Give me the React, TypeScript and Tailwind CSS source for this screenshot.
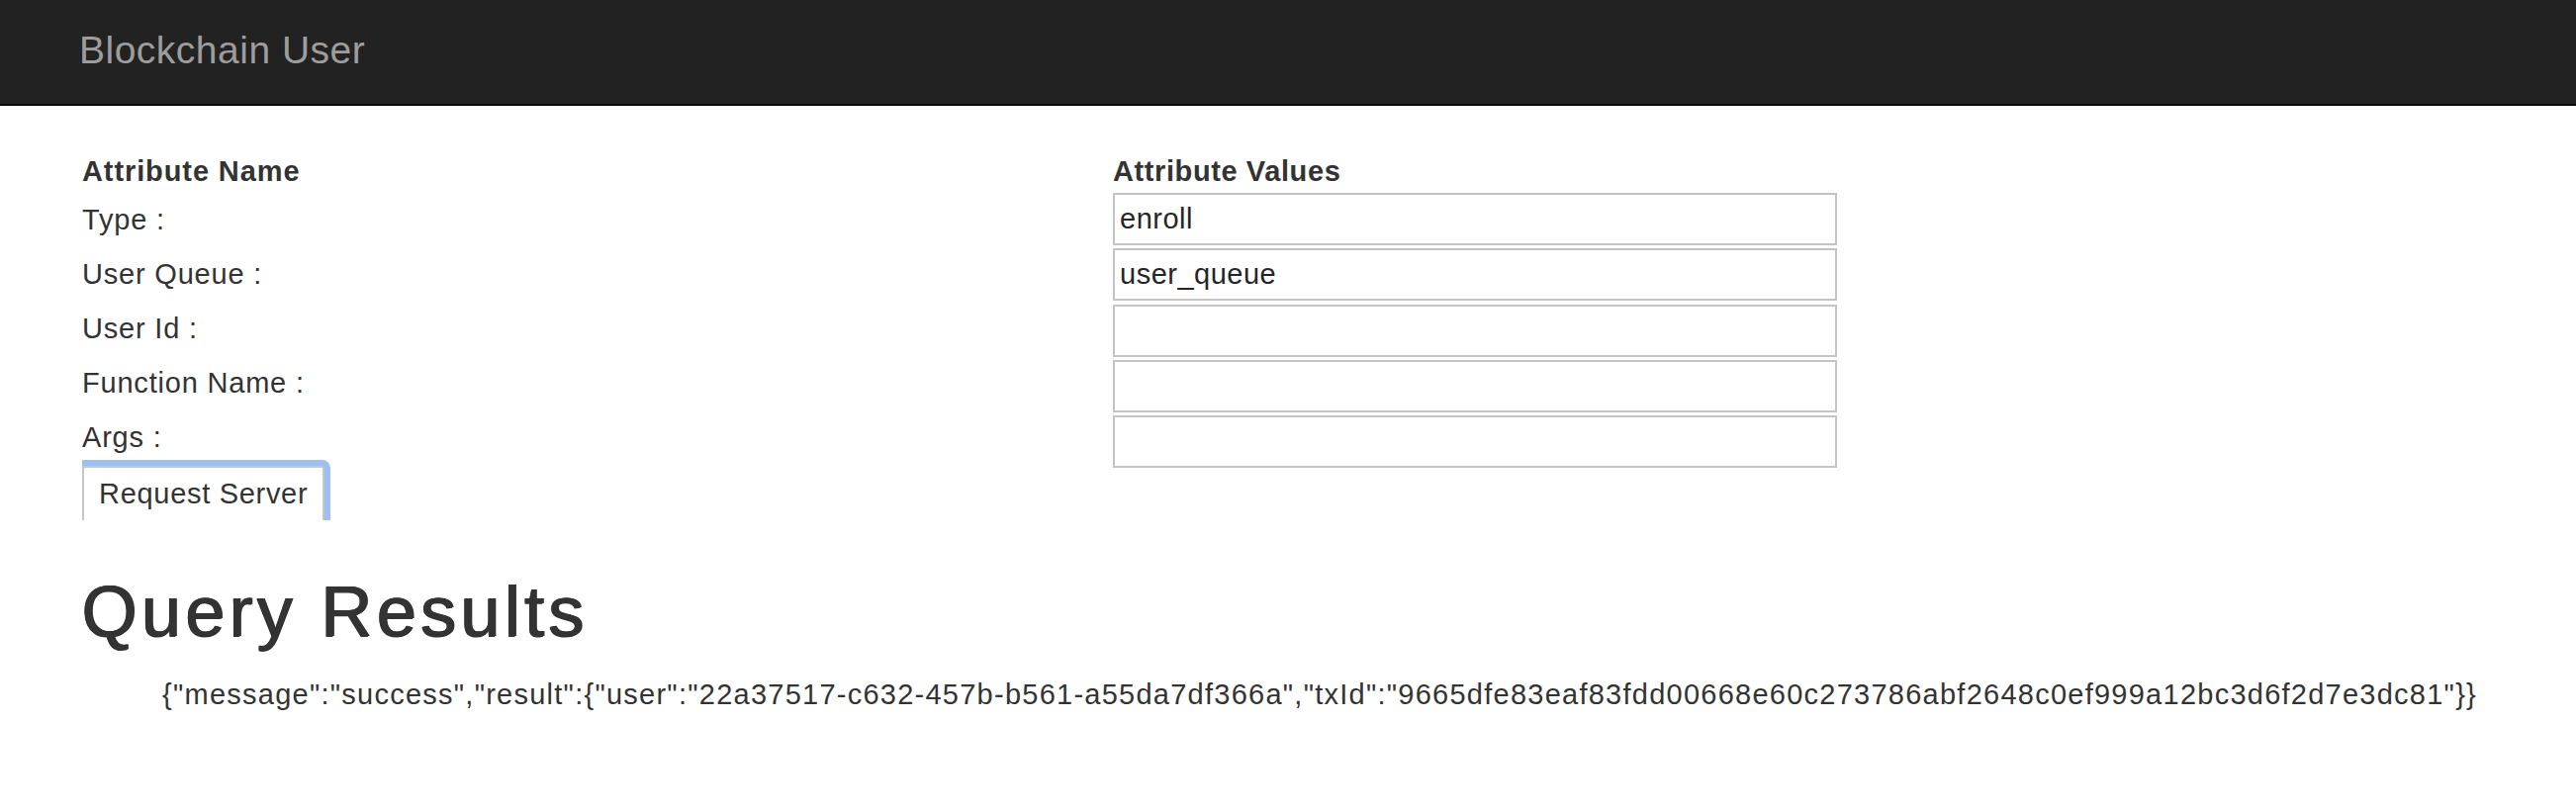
import React from 'react';

const FONT = { fontFamily: '"Liberation Sans", Arial, Helvetica, sans-serif' };

const labels = ['Type :', 'User Queue :', 'User Id :', 'Function Name :', 'Args :'];
const values = ['enroll', 'user_queue', '', '', ''];

const result =
  '{"message":"success","result":{"user":"22a37517-c632-457b-b561-a55da7df366a","txId":"9665dfe83eaf83fdd00668e60c273786abf2648c0ef999a12bc3d6f2d7e3dc81"}}';

export default function App() {
  return (
    <div className="min-h-[820px] w-full bg-white text-[#333]" style={FONT}>
      {/* navbar */}
      <nav className="h-[107px] bg-[#222] border-b-2 border-[#080808]">
        <div className="pl-[80px] pt-[31px] text-[39px] leading-[40px] tracking-[0.5px] text-[#9d9d9d]">
          Blockchain User
        </div>
      </nav>

      <div className="pl-[83px]">
        <div className="flex mt-[50px]">
          {/* names column */}
          <div className="w-[1042px] h-[369px] overflow-hidden">
            <div className="h-[38px] text-[29px] leading-[32px] font-bold tracking-[0.9px]">
              Attribute Name
            </div>
            {labels.map(l => (
              <div key={l} className="h-[55px] text-[29px] leading-[55px] tracking-[0.8px]">
                {l}
              </div>
            ))}
            <button
              type="button"
              className="mt-px h-[68px] px-[15px] pb-[10px] bg-white border-2 border-[#c6c6c6] rounded-[3px] text-[29px] tracking-[0.7px] text-[#333] shadow-[0_0_0_6px_#9cc0f2] cursor-pointer"
            >
              Request Server
            </button>
          </div>

          {/* values column */}
          <div className="w-[732px]">
            <div className="h-[38px] text-[29px] leading-[32px] font-bold tracking-[0.6px]">
              Attribute Values
            </div>
            <div className="flex flex-col gap-[3.25px]">
              {values.map((v, i) => (
                <input
                  key={i}
                  readOnly
                  value={v}
                  className="w-[732px] h-[53px] border-2 border-[#c4c4c4] bg-white px-[5px] text-[29px] tracking-[0.5px] text-[#262626] outline-none"
                  style={FONT}
                />
              ))}
            </div>
          </div>
        </div>

        <h1 className="mt-[52px] text-[72px] leading-[80px] tracking-[4.3px] -ml-[1px] [text-shadow:1.5px_0_0_#333,0.75px_0_0_#333,0_0.75px_0_#333]">
          Query Results
        </h1>
        <p className="mt-[24px] ml-[81px] text-[29px] leading-[40px] tracking-[1.25px] whitespace-nowrap">
          {result}
        </p>
      </div>
    </div>
  );
}
